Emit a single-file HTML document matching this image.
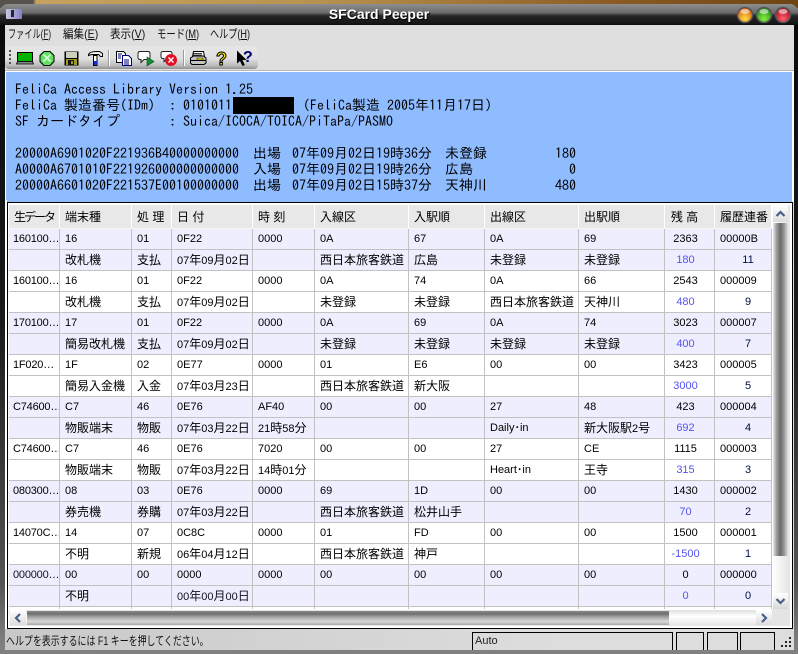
<!DOCTYPE html>
<html><head><meta charset="utf-8"><title>SFCard Peeper</title>
<style>
html,body{margin:0;padding:0;background:#808080}
#p{position:relative;width:798px;height:654px;overflow:hidden;font-family:"Liberation Sans","Noto Sans CJK JP",sans-serif;color:#111;background:#808080}
#p div{position:absolute}
.m{font-size:12px;top:27px;line-height:15px;white-space:pre;color:#111;transform-origin:0 50%}
.m u{text-decoration:underline}
.b{font-family:"IPAGothic","Liberation Mono",monospace;font-size:14px;line-height:16px;white-space:pre;color:#000}
table{border-collapse:separate;border-spacing:0;table-layout:fixed;width:763px;position:absolute;left:0;top:0}
th{height:24px;padding:0 0 0 5px;box-sizing:border-box;background:#e8e8e8;border-right:1px solid #fff;border-bottom:1px solid #f4f4f4;font-weight:normal;font-size:12px;text-align:left;white-space:nowrap;overflow:hidden;color:#000}
td{height:21px;padding:0 0 0 5px;box-sizing:border-box;border-right:1px solid #c2c2c2;border-bottom:1px solid #c2c2c2;font-size:11px;white-space:nowrap;overflow:hidden;color:#000;line-height:18px}
td:first-child{padding-left:4px;letter-spacing:-.2px}
tr.a td{background:#eeeeff}
tr.w td{background:#fff}
td.j{font-size:12px}
td.j i{font-size:11px;font-style:normal}
td.n{text-align:center;padding:0 8px 0 0}
td.u{color:#5555ee;text-align:center;padding:0 8px 0 0}
td.h{text-align:center;padding:0 0 0 10px;color:#001040}
</style></head><body>
<div id="p">
<div style="left:0;top:0;width:798px;height:8px;background:linear-gradient(90deg,#55534c 0,#55534c 33px,#c7a25f 36px,#b8924f 320px,#8a5a22 620px,#6d4414 798px)"></div>
<div style="left:0;top:4px;width:798px;height:21px;border-radius:8px 8px 0 0;background:linear-gradient(180deg,#8e8e8e 0,#6a6a6a 9px,#4a4a4a 10px,#262626 12px,#141414 20px,#050505 21px)"></div>
<div style="left:0;top:25px;width:5px;height:629px;background:linear-gradient(180deg,#0a0a0a 0,#1c1c1c 300px,#555 560px,#808080 620px)"></div>
<div style="left:794px;top:25px;width:4px;height:629px;background:linear-gradient(180deg,#0a0a0a 0,#1c1c1c 300px,#555 560px,#808080 620px)"></div>
<div style="left:6px;top:9px;width:16px;height:10px;background:linear-gradient(90deg,#c8c8e0,#8080c0);border-radius:1px"></div>
<div style="left:11px;top:10px;width:3px;height:7px;background:#223"></div>
<div style="left:320px;top:6px;width:118px;text-align:center;color:#fff;font-weight:bold;font-size:14px;line-height:17px;text-shadow:1px 1px 1px #000;white-space:nowrap">SFCard Peeper</div>
<svg style="position:absolute;left:735px;top:5px" width="60" height="20" viewBox="0 0 60 20">
<defs>
<radialGradient id="o" cx=".5" cy=".75" r=".7"><stop offset="0" stop-color="#ffe040"/><stop offset="1" stop-color="#d85a10"/></radialGradient>
<radialGradient id="g" cx=".5" cy=".75" r=".7"><stop offset="0" stop-color="#88f040"/><stop offset="1" stop-color="#1f8a18"/></radialGradient>
<radialGradient id="r" cx=".5" cy=".75" r=".7"><stop offset="0" stop-color="#ff6070"/><stop offset="1" stop-color="#a81020"/></radialGradient>
</defs>
<circle cx="10" cy="10" r="7.5" fill="url(#o)" stroke="#555" stroke-width="1.5"/><ellipse cx="10" cy="6.5" rx="4.5" ry="2.5" fill="#fff" opacity=".55"/>
<circle cx="29" cy="10" r="7.5" fill="url(#g)" stroke="#555" stroke-width="1.5"/><ellipse cx="29" cy="6.5" rx="4.5" ry="2.5" fill="#fff" opacity=".55"/>
<circle cx="48" cy="10" r="7.5" fill="url(#r)" stroke="#555" stroke-width="1.5"/><ellipse cx="48" cy="6.5" rx="4.5" ry="2.5" fill="#fff" opacity=".55"/>
</svg>

<div style="left:5px;top:25px;width:789px;height:605px;background:#dfdfdf"></div>
<div class="m" style="left:8px;transform:scaleX(.68)">ファイル(<u>F</u>)</div>
<div class="m" style="left:63px;transform:scaleX(.88)">編集(<u>E</u>)</div>
<div class="m" style="left:110px;transform:scaleX(.88)">表示(<u>V</u>)</div>
<div class="m" style="left:157px;transform:scaleX(.78)">モード(<u>M</u>)</div>
<div class="m" style="left:210px;transform:scaleX(.76)">ヘルプ(<u>H</u>)</div>

<div style="left:5px;top:46px;width:253px;height:23px;border-radius:4px;background:linear-gradient(180deg,#e6e6e6 0,#e0e0e0 55%,#bdbdbd 85%,#8f8f8f 100%)"></div>
<svg style="position:absolute;left:0;top:45px" width="262" height="26" viewBox="0 45 262 26">
<g fill="#555"><rect x="9" y="50" width="2" height="2"/><rect x="9" y="54" width="2" height="2"/><rect x="9" y="58" width="2" height="2"/><rect x="9" y="62" width="2" height="2"/></g>
<rect x="108" y="50" width="1" height="16" fill="#999"/><rect x="109" y="50" width="1" height="16" fill="#fff"/>
<rect x="183" y="50" width="1" height="16" fill="#999"/><rect x="184" y="50" width="1" height="16" fill="#fff"/>
<!-- card -->
<path d="M17.5 52.5h15v9h-15z" fill="#00b400" stroke="#000"/><rect x="20" y="54" width="2" height="1" fill="#f00"/>
<path d="M17.5 61.5h15l1 2.5h-17z" fill="#888" stroke="#000" stroke-width=".8"/>
<!-- circle -->
<path d="M44 51.5h6l4 4v6l-4 4h-6l-4-4v-6z" fill="#60e060" stroke="#000"/>
<path d="M43.5 54.5l7 7M50.5 54.5l-7 7" stroke="#d8ffd8" stroke-width="1.6"/>
<!-- floppy -->
<path d="M64.5 51.5h14v14h-14z" fill="#000"/><rect x="66" y="52" width="11" height="6" fill="#cfcfc0"/><rect x="66" y="59" width="11" height="6" fill="#a09a20"/><rect x="68" y="60" width="6" height="5" fill="#111"/><rect x="71" y="61" width="2" height="3" fill="#a09a20"/>
<!-- hammer -->
<path d="M88.5 54.5c1-2.500 5-3 8-3h3l3 2v3h-2l-2-2h-5c-2 0-3 0-5 1z" fill="#eee" stroke="#000"/>
<path d="M93.500 55.500h3.500v10h-3.500z" fill="#fff" stroke="#000"/><rect x="94" y="61" width="3" height="4" fill="#1030d0"/>
<!-- copy -->
<path d="M116.500 51.500h7l2 2v9h-9z" fill="#fff" stroke="#000"/>
<path d="M122.500 55.500h6l3 3v7h-9z" fill="#fff" stroke="#000080"/>
<path d="M118 54h4M118 56h3M118 58h3M124 60h5M124 62h5M124 64h5" stroke="#000080"/>
<!-- bubble arrow -->
<path d="M140 51.500h8q2 0 2 2v4q0 2-2 2h-4l-3 3v-3h-1q-2 0-2-2v-4q0-2 2-2z" fill="#fff" stroke="#222"/>
<path d="M147 57l7 4.500-7 4.500z" fill="#109030" stroke="#064a18" stroke-width=".6"/>
<!-- bubble x -->
<path d="M163 51.500h7q2 0 2 2v3q0 2-2 2h-3l-3 3v-3h-1q-2 0-2-2v-3q0-2 2-2z" fill="#fff" stroke="#222"/>
<circle cx="171" cy="60" r="6" fill="#e01020"/><path d="M168.500 57.500l5 5M173.500 57.500l-5 5" stroke="#fff" stroke-width="1.4"/>
<!-- printer -->
<path d="M193.500 51.500h10l1 5h-12z" fill="#fff" stroke="#000"/>
<path d="M190.500 58l3-2h10l2.500 2v5l-2 1.500h-12l-1.500-1.500z" fill="#c4c4c4" stroke="#000"/>
<path d="M191 60.500h15" stroke="#000"/><rect x="197" y="58" width="6" height="2" fill="#f0e020" stroke="#000" stroke-width=".5"/>
<path d="M193 53.500h9M193 55h9" stroke="#000" stroke-width=".7"/>
<!-- help -->
<text x="216" y="65" font-family="Liberation Sans" font-weight="bold" font-size="18" fill="#f5e800" stroke="#000" stroke-width="1">?</text>
<path d="M237 50.500v13l3-2.500 2.500 5 2.300-1-2.300-5h4z" fill="#000"/>
<text x="243" y="62" font-family="Liberation Sans" font-weight="bold" font-size="16" fill="#000070">?</text>
</svg>

<div style="left:5px;top:70px;width:789px;height:1px;background:#b8b8b8"></div>
<div style="left:5px;top:71px;width:789px;height:131px;background:#fff"></div>
<div style="left:6px;top:72px;width:786px;height:130px;background:#8fbbff"></div>

<div class="b" style="left:15px;top:81px">FeliCa Access Library Version 1.25</div>
<div class="b" style="left:15px;top:97px">FeliCa 製造番号(IDm)  : 0101011</div>
<div style="left:233px;top:97px;width:61px;height:17px;background:#000"></div>
<div class="b" style="left:303px;top:97px">(FeliCa製造 2005年11月17日)</div>
<div class="b" style="left:15px;top:113px">SF カードタイプ       : Suica/ICOCA/TOICA/PiTaPa/PASMO</div>

<div class="b" style="left:15px;top:145px">20000A6901020F221936B40000000000</div>
<div class="b" style="left:253px;top:145px">出場</div>
<div class="b" style="left:292px;top:145px">07年09月02日19時36分</div>
<div class="b" style="left:445px;top:145px">未登録</div>
<div class="b" style="left:555px;top:145px">180</div>
<div class="b" style="left:15px;top:161px">A0000A6701010F221926000000000000</div>
<div class="b" style="left:253px;top:161px">入場</div>
<div class="b" style="left:292px;top:161px">07年09月02日19時26分</div>
<div class="b" style="left:445px;top:161px">広島</div>
<div class="b" style="left:569px;top:161px">0</div>
<div class="b" style="left:15px;top:177px">20000A6601020F221537E00100000000</div>
<div class="b" style="left:253px;top:177px">出場</div>
<div class="b" style="left:292px;top:177px">07年09月02日15時37分</div>
<div class="b" style="left:445px;top:177px">天神川</div>
<div class="b" style="left:555px;top:177px">480</div>

<div style="left:5px;top:200px;width:2px;height:429px;background:#fff"></div>
<div style="left:7px;top:202px;width:786px;height:427px;background:#000"></div>
<div style="left:8px;top:203px;width:784px;height:425px;background:#fff"></div>
<div style="left:9px;top:205px;width:763px;height:404px;overflow:hidden">
<table>
<colgroup><col style="width:51px"><col style="width:72px"><col style="width:40px"><col style="width:81px"><col style="width:62px"><col style="width:94px"><col style="width:76px"><col style="width:94px"><col style="width:86px"><col style="width:50px"><col style="width:57px"></colgroup>
<tr><th style="letter-spacing:-2px">生データ</th><th>端末種</th><th>処 理</th><th>日 付</th><th>時 刻</th><th>入線区</th><th>入駅順</th><th>出線区</th><th>出駅順</th><th style="text-align:center;padding:0 10px 0 0">残 高</th><th>履歴連番</th></tr>
<tr class="a"><td>160100…</td><td>16</td><td>01</td><td>0F22</td><td>0000</td><td>0A</td><td>67</td><td>0A</td><td>69</td><td class="n">2363</td><td>00000B</td></tr>
<tr class="a"><td></td><td class="j">改札機</td><td class="j">支払</td><td class="j"><i>07</i>年<i>09</i>月<i>02</i>日</td><td></td><td class="j">西日本旅客鉄道</td><td class="j">広島</td><td class="j">未登録</td><td class="j">未登録</td><td class="u">180</td><td class="h">11</td></tr>
<tr class="w"><td>160100…</td><td>16</td><td>01</td><td>0F22</td><td>0000</td><td>0A</td><td>74</td><td>0A</td><td>66</td><td class="n">2543</td><td>000009</td></tr>
<tr class="w"><td></td><td class="j">改札機</td><td class="j">支払</td><td class="j"><i>07</i>年<i>09</i>月<i>02</i>日</td><td></td><td class="j">未登録</td><td class="j">未登録</td><td class="j">西日本旅客鉄道</td><td class="j">天神川</td><td class="u">480</td><td class="h">9</td></tr>
<tr class="a"><td>170100…</td><td>17</td><td>01</td><td>0F22</td><td>0000</td><td>0A</td><td>69</td><td>0A</td><td>74</td><td class="n">3023</td><td>000007</td></tr>
<tr class="a"><td></td><td class="j">簡易改札機</td><td class="j">支払</td><td class="j"><i>07</i>年<i>09</i>月<i>02</i>日</td><td></td><td class="j">未登録</td><td class="j">未登録</td><td class="j">未登録</td><td class="j">未登録</td><td class="u">400</td><td class="h">7</td></tr>
<tr class="w"><td>1F020…</td><td>1F</td><td>02</td><td>0E77</td><td>0000</td><td>01</td><td>E6</td><td>00</td><td>00</td><td class="n">3423</td><td>000005</td></tr>
<tr class="w"><td></td><td class="j">簡易入金機</td><td class="j">入金</td><td class="j"><i>07</i>年<i>03</i>月<i>23</i>日</td><td></td><td class="j">西日本旅客鉄道</td><td class="j">新大阪</td><td></td><td></td><td class="u">3000</td><td class="h">5</td></tr>
<tr class="a"><td>C74600…</td><td>C7</td><td>46</td><td>0E76</td><td>AF40</td><td>00</td><td>00</td><td>27</td><td>48</td><td class="n">423</td><td>000004</td></tr>
<tr class="a"><td></td><td class="j">物販端末</td><td class="j">物販</td><td class="j"><i>07</i>年<i>03</i>月<i>22</i>日</td><td class="j"><i>21</i>時<i>58</i>分</td><td></td><td></td><td>Daily･in</td><td class="j">新大阪駅<i>2</i>号</td><td class="u">692</td><td class="h">4</td></tr>
<tr class="w"><td>C74600…</td><td>C7</td><td>46</td><td>0E76</td><td>7020</td><td>00</td><td>00</td><td>27</td><td>CE</td><td class="n">1115</td><td>000003</td></tr>
<tr class="w"><td></td><td class="j">物販端末</td><td class="j">物販</td><td class="j"><i>07</i>年<i>03</i>月<i>22</i>日</td><td class="j"><i>14</i>時<i>01</i>分</td><td></td><td></td><td>Heart･in</td><td class="j">王寺</td><td class="u">315</td><td class="h">3</td></tr>
<tr class="a"><td>080300…</td><td>08</td><td>03</td><td>0E76</td><td>0000</td><td>69</td><td>1D</td><td>00</td><td>00</td><td class="n">1430</td><td>000002</td></tr>
<tr class="a"><td></td><td class="j">券売機</td><td class="j">券購</td><td class="j"><i>07</i>年<i>03</i>月<i>22</i>日</td><td></td><td class="j">西日本旅客鉄道</td><td class="j">松井山手</td><td></td><td></td><td class="u">70</td><td class="h">2</td></tr>
<tr class="w"><td>14070C…</td><td>14</td><td>07</td><td>0C8C</td><td>0000</td><td>01</td><td>FD</td><td>00</td><td>00</td><td class="n">1500</td><td>000001</td></tr>
<tr class="w"><td></td><td class="j">不明</td><td class="j">新規</td><td class="j"><i>06</i>年<i>04</i>月<i>12</i>日</td><td></td><td class="j">西日本旅客鉄道</td><td class="j">神戸</td><td></td><td></td><td class="u">-1500</td><td class="h">1</td></tr>
<tr class="a"><td style="color:#112">000000…</td><td>00</td><td>00</td><td>0000</td><td>0000</td><td>00</td><td>00</td><td>00</td><td>00</td><td class="n">0</td><td>000000</td></tr>
<tr class="a"><td></td><td class="j">不明</td><td></td><td class="j" style="color:#112"><i>00</i>年<i>00</i>月<i>00</i>日</td><td></td><td></td><td></td><td></td><td></td><td class="u">0</td><td class="h">0</td></tr>
<tr class="w"><td></td><td></td><td></td><td></td><td></td><td></td><td></td><td></td><td></td><td></td><td></td></tr>
</table>
</div>

<!-- vertical scrollbar -->
<div style="left:772px;top:205px;width:18px;height:404px;background:linear-gradient(90deg,#fff,#e4e4e4)"></div>
<div style="left:773px;top:205px;width:15px;height:17px;background:linear-gradient(180deg,#fff,#dcdcdc)"></div>
<div style="left:773px;top:223px;width:15px;height:333px;background:linear-gradient(90deg,#e8e8e8 0,#9a9a9a 25%,#6a6a6a 50%,#9a9a9a 75%,#e0e0e0 100%)"></div>
<div style="left:773px;top:593px;width:15px;height:16px;background:linear-gradient(180deg,#fff,#d8d8d8)"></div>
<!-- corner -->
<div style="left:772px;top:609px;width:18px;height:17px;background:#e4e4e4"></div>
<!-- horizontal scrollbar -->
<div style="left:9px;top:610px;width:763px;height:16px;background:linear-gradient(180deg,#e0e0e0,#fff 40%,#e4e4e4)"></div>
<div style="left:10px;top:610px;width:16px;height:15px;background:linear-gradient(180deg,#fff,#dcdcdc)"></div>
<div style="left:27px;top:611px;width:642px;height:14px;background:linear-gradient(180deg,#8a8a8a 0,#6f6f6f 20%,#a8a8a8 45%,#d8d8d8 75%,#aaa 100%)"></div>
<div style="left:756px;top:610px;width:16px;height:15px;background:linear-gradient(180deg,#fff,#dcdcdc)"></div>
<svg style="position:absolute;left:0;top:200px" width="798" height="430" viewBox="0 200 798 430">
<g fill="none" stroke="#4a5f88" stroke-width="2.2">
<path d="M776.500 216l4-4 4 4"/>
<path d="M776.500 599l4 4 4-4"/>
<path d="M20 614l-4 4 4 4"/>
<path d="M762 614l4 4-4 4"/>
</g>
</svg>

<!-- status bar -->
<div style="left:5px;top:629px;width:789px;height:21px;background:linear-gradient(90deg,#c8c8c8,#dddddd 70%)"></div>
<div style="left:6px;top:634px;font-size:12px;line-height:15px;white-space:pre;color:#111;transform:scaleX(.745);transform-origin:0 50%">ヘルプを表示するには F1 キーを押してください。</div>
<div style="left:472px;top:632px;width:201px;height:18px;border:solid #000;border-width:1px 1px 0 1px;box-sizing:border-box;font-size:11px;line-height:17px;padding-left:2px;color:#222">Auto</div>
<div style="left:676px;top:632px;width:28px;height:18px;border:solid #000;border-width:1px 1px 0 1px;box-sizing:border-box"></div>
<div style="left:707px;top:632px;width:31px;height:18px;border:solid #000;border-width:1px 1px 0 1px;box-sizing:border-box"></div>
<div style="left:740px;top:632px;width:35px;height:18px;border:solid #000;border-width:1px 1px 0 1px;box-sizing:border-box"></div>
<svg style="position:absolute;left:778px;top:634px" width="16" height="16" viewBox="0 0 16 16"><g fill="#222"><rect x="11" y="3" width="2" height="2"/><rect x="7" y="7" width="2" height="2"/><rect x="11" y="7" width="2" height="2"/><rect x="3" y="11" width="2" height="2"/><rect x="7" y="11" width="2" height="2"/><rect x="11" y="11" width="2" height="2"/></g></svg>
<div style="left:0;top:650px;width:798px;height:4px;background:#808080"></div>
</div>
</body></html>
